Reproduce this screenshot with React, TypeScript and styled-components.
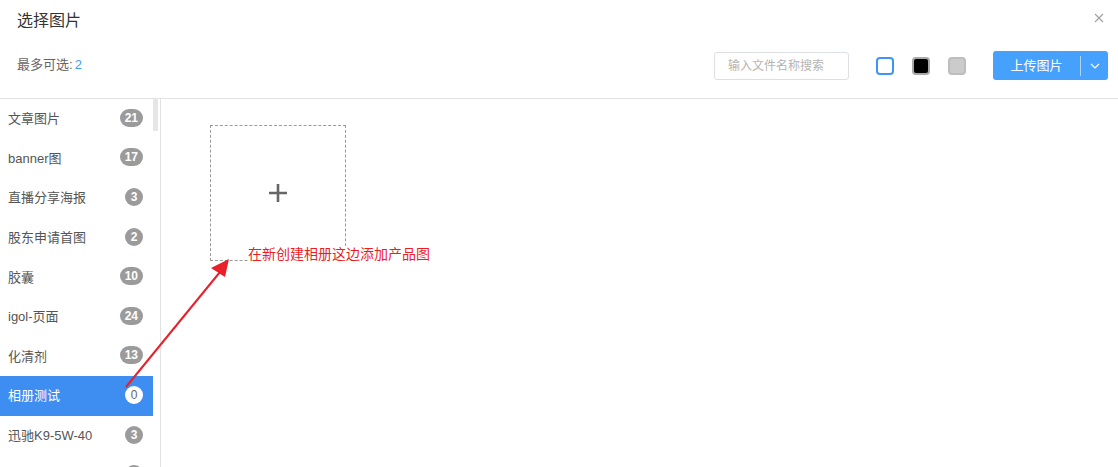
import React from "react";
import styled, { createGlobalStyle } from "styled-components";

const Global = createGlobalStyle`
  html, body { margin: 0; padding: 0; background: #fff; }
  body { font-family: "Liberation Sans", "Noto Sans CJK SC", sans-serif; overflow: hidden; }
  * { box-sizing: border-box; }
`;

const Dialog = styled.div`
  position: relative;
  width: 1118px;
  height: 467px;
  overflow: hidden;
  background: #fff;
  display: flex;
  flex-direction: column;
`;

const Header = styled.div`
  height: 99px;
  border-bottom: 1px solid #e2e2e2;
  display: flex;
  flex-direction: column;
  padding: 11px 10px 0 17px;
`;

const TitleRow = styled.div`
  display: flex;
  justify-content: space-between;
  align-items: flex-start;
  height: 40px;
`;

const Title = styled.div`
  font-size: 16px;
  line-height: 20px;
  color: #333;
`;

const Close = styled.button`
  border: 0;
  background: none;
  padding: 0;
  margin: 0 2px 0 0;
  width: 14px;
  height: 14px;
  display: flex;
  align-items: center;
  justify-content: center;
  cursor: pointer;
`;

const Toolbar = styled.div`
  display: flex;
  align-items: center;
  height: 29px;
`;

const Limit = styled.div`
  font-size: 13px;
  line-height: 16px;
  color: #666;
  flex: 1;
  margin-top: -2px;
`;

const Num = styled.span`
  color: #409eff;
  margin-left: 2px;
`;

const Search = styled.input`
  width: 135px;
  height: 28px;
  border: 1px solid #dcdfe6;
  border-radius: 3px;
  padding: 0 13px;
  font-size: 12px;
  font-family: inherit;
  color: #333;
  outline: none;
  &::placeholder { color: #b4b4b4; }
`;

const Swatches = styled.div`
  display: flex;
  gap: 18px;
  margin: 0 27px;
`;

const Swatch = styled.div<{ $fill: string; $border: string }>`
  width: 18px;
  height: 18px;
  border-radius: 4px;
  border: 2px solid ${(p) => p.$border};
  background: ${(p) => p.$fill};
`;

const Upload = styled.div`
  display: flex;
  align-items: center;
  width: 115px;
  height: 29px;
  background: #46a1fc;
  border-radius: 3px;
  color: #fff;
`;

const UploadMain = styled.div`
  width: 88px;
  text-align: center;
  font-size: 13px;
  border-right: 1px solid rgba(255, 255, 255, 0.55);
  line-height: 20px;
`;

const UploadArrow = styled.div`
  flex: 1;
  display: flex;
  justify-content: center;
  align-items: center;
`;

const Body = styled.div`
  flex: 1;
  display: flex;
  min-height: 0;
`;

const Side = styled.div`
  position: relative;
  width: 161px;
  border-right: 1px solid #e2e2e2;
  overflow: hidden;
`;

const Thumb = styled.div`
  position: absolute;
  left: 153px;
  top: 0;
  width: 5px;
  height: 32px;
  background: #e6e6e6;
  border-radius: 1px;
`;

const List = styled.div`
  width: 153px;
  display: flex;
  flex-direction: column;
`;

const Item = styled.div<{ $active?: boolean }>`
  height: 39.6px;
  flex: 0 0 39.6px;
  display: flex;
  align-items: center;
  justify-content: space-between;
  padding: 0 10px 2px 8px;
  font-size: 13px;
  color: ${(p) => (p.$active ? "#fff" : "#555")};
  background: ${(p) => (p.$active ? "#3d8ef0" : "transparent")};
`;

const Badge = styled.span<{ $active?: boolean }>`
  min-width: 18px;
  height: 18px;
  padding: 0 5px;
  border-radius: 9px;
  background: ${(p) => (p.$active ? "#fff" : "#9b9b9b")};
  color: ${(p) => (p.$active ? "#666" : "#fff")};
  font-size: 12px;
  font-weight: ${(p) => (p.$active ? "normal" : "bold")};
  display: inline-flex;
  align-items: center;
  justify-content: center;
`;

const Content = styled.div`
  position: relative;
  flex: 1;
  padding: 26px 0 0 49px;
`;

const AddBox = styled.div`
  width: 136px;
  height: 136px;
  border: 1px dashed #9a9a9a;
  display: flex;
  align-items: center;
  justify-content: center;
`;

const Note = styled.div`
  position: absolute;
  left: 87px;
  top: 147px;
  background: #fff;
  color: #ee1d24;
  font-size: 14px;
  line-height: 16px;
`;

const Arrow = styled.svg`
  position: absolute;
  left: 0;
  top: 0;
  pointer-events: none;
`;

const items: [string, number][] = [
  ["文章图片", 21],
  ["banner图", 17],
  ["直播分享海报", 3],
  ["股东申请首图", 2],
  ["胶囊", 10],
  ["igol-页面", 24],
  ["化清剂", 13],
  ["相册测试", 0],
  ["迅驰K9-5W-40", 3],
  ["机油", 5],
];

export default function App() {
  return (
    <>
      <Global />
      <Dialog>
        <Header>
          <TitleRow>
            <Title>选择图片</Title>
            <Close aria-label="close">
              <svg width="10" height="10" viewBox="0 0 10 10">
                <path d="M1 1L9 9M9 1L1 9" stroke="#a0a0a0" strokeWidth="1.1" />
              </svg>
            </Close>
          </TitleRow>
          <Toolbar>
            <Limit>
              最多可选:<Num>2</Num>
            </Limit>
            <Search placeholder="输入文件名称搜索" />
            <Swatches>
              <Swatch $fill="#fff" $border="#3f94f6" />
              <Swatch $fill="#000" $border="#a9a9a9" />
              <Swatch $fill="#cbcbcb" $border="#bdbdbd" />
            </Swatches>
            <Upload>
              <UploadMain>上传图片</UploadMain>
              <UploadArrow>
                <svg width="10" height="6" viewBox="0 0 10 6">
                  <path d="M1 1L5 5L9 1" stroke="#fff" strokeWidth="1.2" fill="none" />
                </svg>
              </UploadArrow>
            </Upload>
          </Toolbar>
        </Header>
        <Body>
          <Side>
            <List>
              {items.map(([name, n]) => {
                const active = name === "相册测试";
                return (
                  <Item key={name} $active={active}>
                    <span>{name}</span>
                    <Badge $active={active}>{n}</Badge>
                  </Item>
                );
              })}
            </List>
            <Thumb />
          </Side>
          <Content>
            <AddBox>
              <svg width="18" height="18" viewBox="0 0 18 18">
                <path d="M9 0V18M0 9H18" stroke="#666" strokeWidth="2.6" />
              </svg>
            </AddBox>
            <Note>在新创建相册这边添加产品图</Note>
          </Content>
        </Body>
        <Arrow width="1118" height="467" viewBox="0 0 1118 467">
          <line x1="126" y1="387" x2="220" y2="272" stroke="#e8202a" strokeWidth="2" />
          <polygon points="229,259 211,268 225,277" fill="#e8202a" />
        </Arrow>
      </Dialog>
    </>
  );
}
